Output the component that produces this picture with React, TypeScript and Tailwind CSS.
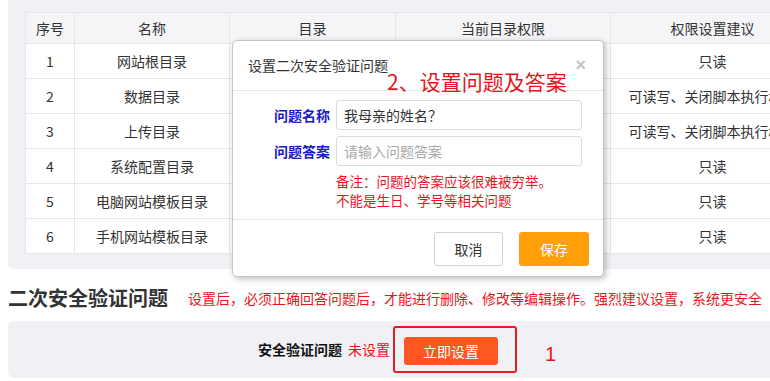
import React from 'react';

const rows = [
  { no: '1', name: '网站根目录', advice: '只读' },
  { no: '2', name: '数据目录', advice: '可读写、关闭脚本执行权限' },
  { no: '3', name: '上传目录', advice: '可读写、关闭脚本执行权限' },
  { no: '4', name: '系统配置目录', advice: '只读' },
  { no: '5', name: '电脑网站模板目录', advice: '只读' },
  { no: '6', name: '手机网站模板目录', advice: '只读' },
];

const font = { fontFamily: '"Noto Sans CJK SC", "Liberation Sans", sans-serif' };

const App: React.FC = () => {
  return (
    <div className="relative w-[770px] h-[381px] overflow-hidden bg-white text-[#333]" style={font}>
      {/* directory table */}
      <div className="ml-2 w-[820px] rounded-b-md bg-[#f1f1f5] pl-[17px] pt-3 pb-[15px]">
        <table className="table-fixed border-collapse text-[14px]">
          <colgroup>
            <col className="w-[49px]" />
            <col className="w-[155px]" />
            <col className="w-[166px]" />
            <col className="w-[215px]" />
            <col className="w-[204px]" />
          </colgroup>
          <thead>
            <tr className="h-[31px] bg-[#f5f5f7]">
              {['序号', '名称', '目录', '当前目录权限', '权限设置建议'].map((h) => (
                <th key={h} className="border border-[#e6e6e9] font-normal text-center whitespace-nowrap">
                  {h}
                </th>
              ))}
            </tr>
          </thead>
          <tbody className="bg-white">
            {rows.map((r) => (
              <tr key={r.no} className="h-[35px]">
                <td className="border border-[#e6e6e9] text-center">{r.no}</td>
                <td className="border border-[#e6e6e9] text-center">{r.name}</td>
                <td className="border border-[#e6e6e9]"></td>
                <td className="border border-[#e6e6e9]"></td>
                <td className="border border-[#e6e6e9] text-center whitespace-nowrap">{r.advice}</td>
              </tr>
            ))}
          </tbody>
        </table>
      </div>

      {/* second verification */}
      <div className="flex items-center h-[52px] pl-2 pt-[6px]">
        <h2 className="text-[20px] font-bold text-[#333] leading-none">二次安全验证问题</h2>
        <span className="ml-[20px] text-[14px] text-[#e8141b] whitespace-nowrap">
          设置后，必须正确回答问题后，才能进行删除、修改等编辑操作。强烈建议设置，系统更安全
        </span>
      </div>
      <div className="ml-2 w-[780px] h-[57px] rounded-md bg-[#f1f1f5] flex items-center pl-[250px]">
        <span className="text-[14px] font-bold text-[#111]">安全验证问题</span>
        <span className="ml-[6px] text-[14px] text-[#e8141b]">未设置</span>
        <div className="ml-[3px] rounded-[3px] border-2 border-[#e51c23] pl-[9px] pr-[17px] pt-[9px] pb-[6px]">
          <button className="block w-[94px] h-[28px] rounded-[3px] bg-[#ff5722] text-[14px] text-white">
            立即设置
          </button>
        </div>
        <span className="ml-[28px] mt-[8px] text-[20px] text-[#e8141b]" style={{ fontFamily: '"Liberation Sans", sans-serif' }}>
          1
        </span>
      </div>

      {/* dialog */}
      <div className="absolute left-[232px] top-[40px] w-[372px] h-[237px] rounded-[5px] border border-[#c4c4c4] bg-white shadow-[2px_2px_6px_rgba(0,0,0,0.25)]">
        <div className="relative flex items-center justify-between h-[50px] border-b border-[#e6e6e6] pl-[15px] pr-[17px]">
          <span className="text-[14px] text-[#333]">设置二次安全验证问题</span>
          <span
            className="mb-[2px] text-[18px] font-bold text-[#c4c4c4] leading-none"
            style={{ fontFamily: '"Liberation Sans", sans-serif' }}
          >
            ×
          </span>
          <span className="absolute left-[154px] top-[30px] text-[21px] leading-none text-[#e8141b] whitespace-nowrap">
            2、设置问题及答案
          </span>
        </div>
        <div className="h-[128px] pt-[9px] pr-[21px]">
          <div className="flex items-center gap-[6px]">
            <span className="w-[97px] text-right text-[14px] font-bold text-[#1a1ac8]">问题名称</span>
            <div className="flex-1 h-[30px] flex items-center rounded-[3px] border border-[#dcdcdc] pl-[7px] text-[14px] text-[#333]">
              我母亲的姓名？
            </div>
          </div>
          <div className="mt-[6px] flex items-center gap-[6px]">
            <span className="w-[97px] text-right text-[14px] font-bold text-[#1a1ac8]">问题答案</span>
            <div className="flex-1 h-[30px] flex items-center rounded-[3px] border border-[#dcdcdc] pl-[7px] text-[14px] text-[#a9a9a9]">
              请输入问题答案
            </div>
          </div>
          <div className="ml-[103px] mt-[6px] text-[13.5px] leading-[19px] text-[#e8141b]">
            <div>备注：问题的答案应该很难被穷举。</div>
            <div>不能是生日、学号等相关问题</div>
          </div>
        </div>
        <div className="flex justify-end gap-[16px] border-t border-[#e6e6e6] pt-[12px] pr-[14px]">
          <button className="w-[69px] h-[34px] rounded-[3px] border border-[#d2d2d2] bg-white text-[14px] text-[#333]">
            取消
          </button>
          <button className="w-[70px] h-[34px] rounded-[3px] bg-[#ff9f0a] text-[14px] text-white">
            保存
          </button>
        </div>
      </div>
    </div>
  );
};

export default App;
